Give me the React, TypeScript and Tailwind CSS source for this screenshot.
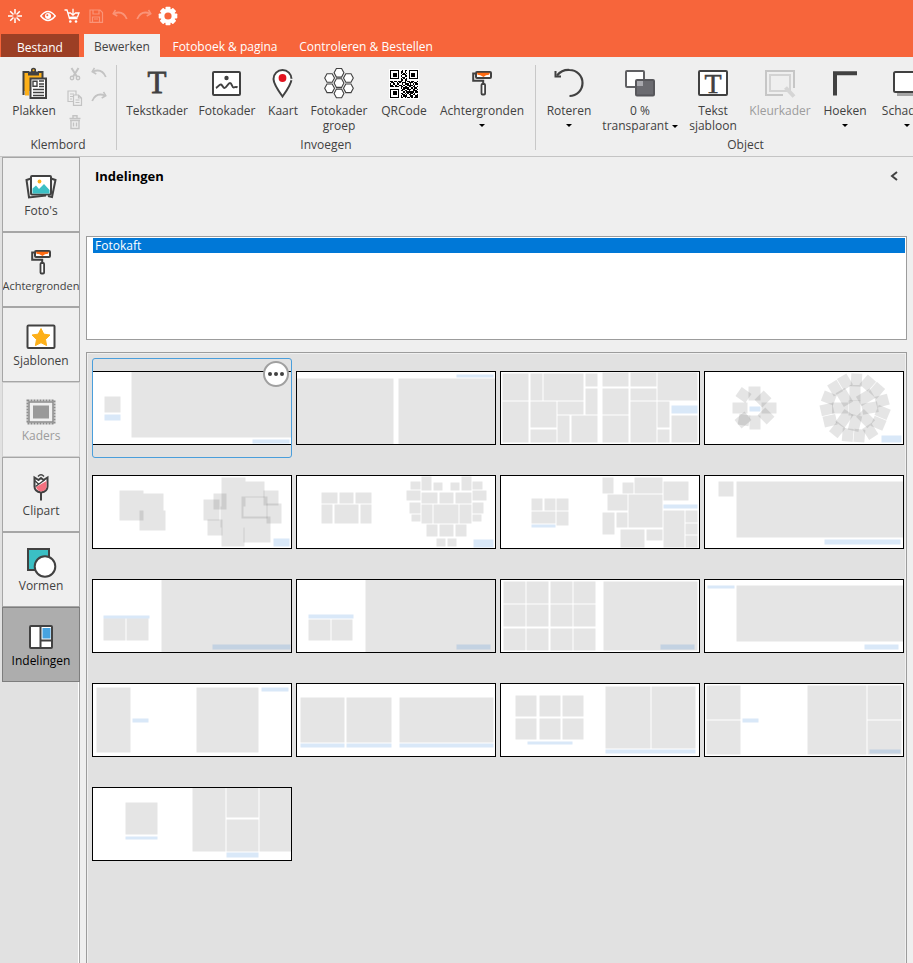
import type { ReactNode } from "react";
import clsx from "clsx";

type Box = [number, number, number, number, number?];
type Layout = { name: string; photos: Box[]; texts: Box[] };

const INK = "#414141";

/* ---------- layout thumbnails (200 x 74 units each) ---------- */

function ring(cx: number, cy: number, radius: number, count: number, w: number, h: number, start: number): Box[] {
  return Array.from({ length: count }, (_, i) => {
    const angle = start + (i * 360) / count;
    const rad = (angle * Math.PI) / 180;
    const tilt = i % 3 === 1 ? 14 : i % 3 === 2 ? -10 : 0;
    return [cx + Math.sin(rad) * radius - w / 2, cy - Math.cos(rad) * radius - h / 2, w, h, angle + tilt] as Box;
  });
}

function matrix(xs: number[], ys: number[], w: number, h: number): Box[] {
  return ys.flatMap((y) => xs.map((x) => [x, y, w, h] as Box));
}

const layouts: Layout[] = [
  { name: "Indeling 1", photos: [[39, 0, 161, 67], [12, 25, 17, 17]], texts: [[12, 43, 17, 7], [160, 68, 38, 5]] },
  { name: "Indeling 2", photos: [[0, 7, 98, 67], [102, 7, 98, 67]], texts: [[160, 3, 38, 4]] },
  {
    name: "Indeling 3",
    photos: [
      [2, 2, 27, 28], [30, 2, 13, 28], [43, 2, 41, 28], [85, 2, 13, 14], [2, 30, 27, 42], [30, 30, 27, 27],
      [57, 30, 27, 14], [85, 17, 13, 27], [30, 58, 27, 14], [57, 44, 13, 28], [71, 44, 27, 28], [102, 1, 27, 15],
      [102, 17, 27, 27], [102, 44, 27, 28], [130, 1, 27, 15], [130, 17, 27, 13], [130, 30, 27, 42], [157, 1, 41, 29],
      [157, 30, 13, 27], [157, 58, 13, 14], [171, 44, 27, 28],
    ],
    texts: [[171, 34, 27, 9]],
  },
  {
    name: "Indeling 4",
    photos: [
      [44, 15, 13, 15], [28, 31, 16, 12], [57, 31, 16, 12], [45, 44, 12, 15], [33, 18, 13, 12, 35], [52, 22, 14, 12, -45],
      [55, 39, 14, 12, 45], [32, 43, 14, 12, -40], [34, 43, 12, 12, 10],
      ...ring(151, 37, 28, 15, 12, 14, 3),
      ...ring(151, 37, 15, 8, 12, 17, 0),
      [144, 29, 13, 16],
    ],
    texts: [[45, 35, 12, 6], [177, 64, 21, 8]],
  },
  {
    name: "Indeling 5",
    photos: [
      [27, 15, 25, 31], [51, 18, 21, 18], [47, 35, 27, 21], [129, 2, 25, 30], [153, 6, 20, 17], [171, 15, 16, 16],
      [149, 21, 27, 23], [174, 28, 16, 21], [121, 18, 14, 17], [111, 24, 17, 22], [128, 31, 24, 22], [115, 44, 16, 17],
      [129, 52, 24, 20], [151, 41, 28, 27],
    ],
    texts: [[181, 63, 17, 9]],
  },
  {
    name: "Indeling 6",
    photos: [
      [25, 17, 17, 12], [43, 17, 15, 12], [59, 17, 17, 12], [25, 29, 12, 20], [38, 29, 25, 20], [64, 29, 12, 20],
      [114, 6, 11, 9], [125, 1, 11, 15], [137, 7, 10, 9], [154, 7, 10, 9], [165, 1, 11, 15], [176, 6, 11, 9],
      [110, 15, 15, 11], [125, 17, 17, 12], [143, 17, 15, 12], [159, 17, 17, 12], [176, 15, 15, 11], [113, 27, 12, 12],
      [115, 39, 10, 8], [125, 29, 12, 20], [137, 29, 26, 20], [163, 29, 13, 20], [176, 27, 12, 12], [176, 39, 10, 8],
      [130, 49, 12, 13], [143, 49, 15, 13], [159, 49, 12, 13], [140, 63, 10, 9], [151, 63, 10, 9],
    ],
    texts: [[177, 64, 21, 9]],
  },
  {
    name: "Indeling 7",
    photos: [
      [31, 23, 12, 13], [44, 23, 12, 13], [56, 23, 13, 13], [31, 36, 25, 13], [56, 36, 13, 15], [102, 2, 12, 17],
      [122, 7, 12, 12], [134, 2, 29, 17], [163, 6, 26, 20], [107, 19, 21, 17], [128, 19, 35, 34], [102, 37, 13, 23],
      [116, 37, 12, 16], [120, 54, 25, 19], [146, 54, 17, 12], [163, 35, 22, 38], [185, 35, 13, 13], [185, 48, 13, 12],
      [185, 60, 13, 13],
    ],
    texts: [[31, 49, 25, 4], [163, 29, 35, 5]],
  },
  { name: "Indeling 8", photos: [[14, 6, 16, 16], [32, 6, 168, 57]], texts: [[120, 64, 77, 6]] },
  { name: "Indeling 9", photos: [[69, 0, 131, 74], [11, 39, 23, 23], [34, 39, 23, 23]], texts: [[11, 36, 47, 4], [120, 65, 79, 6]] },
  { name: "Indeling 10", photos: [[69, 0, 131, 74], [12, 40, 23, 22], [35, 40, 22, 22]], texts: [[12, 35, 46, 5], [160, 65, 35, 6]] },
  {
    name: "Indeling 11",
    photos: [...matrix([3, 26, 50, 73], [2, 25, 49], 23, 23), [103, 2, 95, 70]],
    texts: [[160, 65, 35, 6]],
  },
  { name: "Indeling 12", photos: [[32, 6, 168, 57]], texts: [[3, 6, 28, 4], [160, 65, 35, 6]] },
  { name: "Indeling 13", photos: [[4, 4, 35, 66], [104, 4, 63, 66]], texts: [[40, 35, 17, 5], [169, 4, 28, 5]] },
  {
    name: "Indeling 14",
    photos: [[4, 14, 45, 46], [50, 14, 46, 46], [103, 14, 95, 46]],
    texts: [[4, 60, 45, 5], [50, 60, 46, 5], [103, 60, 95, 5]],
  },
  {
    name: "Indeling 15",
    photos: [...matrix([15, 39, 62], [12, 35], 22, 22), [105, 3, 46, 63], [151, 3, 45, 63]],
    texts: [[27, 58, 46, 4], [105, 66, 91, 5]],
  },
  {
    name: "Indeling 16",
    photos: [[2, 2, 35, 35], [2, 37, 35, 35], [103, 2, 60, 70], [163, 2, 35, 35], [163, 37, 35, 35]],
    texts: [[38, 35, 17, 5], [165, 66, 32, 5]],
  },
  {
    name: "Indeling 17",
    photos: [[33, 15, 33, 33], [100, 0, 34, 65], [134, 0, 33, 31], [134, 32, 33, 33], [167, 0, 33, 65]],
    texts: [[33, 49, 33, 4], [134, 65, 33, 6]],
  },
];

function Thumbnail({ layout, selected }: { layout: Layout; selected: boolean }) {
  const draw = ([x, y, w, h, angle = 0]: Box, i: number) => (
    <rect key={i} x={x + 0.5} y={y + 0.5} width={w - 1} height={h - 1} transform={`rotate(${angle} ${x + w / 2} ${y + h / 2})`} />
  );
  return (
    <svg viewBox="0 0 200 74" className="block w-full bg-white" aria-hidden="true">
      <g fill="#000" fillOpacity=".1">{layout.photos.map(draw)}</g>
      <g fill="#0066d0" fillOpacity=".15">{layout.texts.map(draw)}</g>
      {selected ? (
        <path d="M0 .5H200M0 73.5H200" stroke="#000" />
      ) : (
        <rect x=".5" y=".5" width="199" height="73" fill="none" stroke="#000" />
      )}
    </svg>
  );
}

/* ---------- icons ---------- */

function Icon({ size = 32, className, children }: { size?: number; className?: string; children: ReactNode }) {
  return (
    <svg width={size} height={size} viewBox={`0 0 ${size} ${size}`} fill="none" stroke={INK} strokeWidth="2" className={clsx("shrink-0", className)} aria-hidden="true">
      {children}
    </svg>
  );
}

const Spark = () => (
  <Icon size={16}>
    <g stroke="#fff" strokeWidth="1.5">
      <path d="M8 1v4.500M8 10.500V15M1 8h4.500M10.500 8H15M3.200 3.200l3 3M9.800 9.800l3 3M12.800 3.200l-3 3M6.200 9.800l-3 3" />
      <circle cx="8" cy="8" r="2.300" strokeWidth=".8" strokeOpacity=".6" />
    </g>
  </Icon>
);
const Eye = () => (
  <Icon size={16}>
    <path d="M.8 8Q8-.8 15.200 8 8 16.800.8 8Z" stroke="#fff" strokeWidth="1.500" />
    <circle cx="8" cy="8" r="3" fill="#fff" stroke="none" />
    <circle cx="7.300" cy="7.300" r="1" fill="#f7653b" stroke="none" />
  </Icon>
);
const Cart = () => (
  <Icon size={16}>
    <path d="M.5 2h2.500l2.500 8.500h8M3.500 5h3M11.500 5H15l-1.500 4-8.500.5M9 .8v6M6.300 4.800 9 7.200l2.700-2.400" stroke="#fff" strokeWidth="1.300" />
    <circle cx="6.300" cy="13.500" r="1.300" fill="#fff" stroke="none" />
    <circle cx="12" cy="13.500" r="1.300" fill="#fff" stroke="none" />
  </Icon>
);
const Save = () => (
  <Icon size={16}>
    <path d="M2 2h10l2.500 2.500V14.300H2ZM5 2v4h6V2M4.500 14V9h7v5M6 11h4" stroke="#fa9478" strokeWidth="1.200" />
  </Icon>
);
function Turn({ color, flip }: { color: string; flip?: boolean }) {
  return (
    <Icon size={16} className={flip ? "-scale-x-100" : ""}>
      <path d="M2 5.500Q11 2 14.800 11" stroke={color} strokeWidth="1.800" />
      <path d="M3.500 2 1.200 5.700 5.300 8" stroke={color} strokeWidth="1.500" />
    </Icon>
  );
}
const Gear = () => (
  <Icon size={20}>
    <g fill="#fff" stroke="none">
      <circle cx="10" cy="10" r="7.300" />
      {[0, 45, 90, 135].map((a) => (
        <rect key={a} x="7.500" y=".7" width="5" height="18.600" rx=".8" transform={`rotate(${a} 10 10)`} />
      ))}
    </g>
    <circle cx="10" cy="10" r="3.600" fill="#f7653b" stroke="none" />
  </Icon>
);

const Paste = () => (
  <Icon>
    <path d="M5.500 5h19v19h-19z" fill="#fdb019" stroke="none" />
    <path d="M5.500 28V5H11M20 5h4.500v6" />
    <path d="M7 24h4v4.500H7z" fill="#fdb019" stroke="none" />
    <path d="M10 8.500V4.500h3V2q2.500-2.500 5 0v2.500h3v4Z" fill={INK} stroke="none" />
    <circle cx="15.500" cy="3.200" r="1" fill="#fdb019" stroke="none" />
    <path d="M12.500 11.500H28v19.500H12.500z" fill="#fff" />
    <path d="M15 14.200h4v5h-4ZM21 14h5M21 17h5M21 19.500h5M15 22.500h11M15 25.500h11M15 28.500h11" strokeWidth="1.400" />
  </Icon>
);
const Scissors = () => (
  <Icon size={16}>
    <path d="M4.500 2 9.800 10.500M11.500 2 6.200 10.500" stroke="#c3c3c3" strokeWidth="2" />
    <circle cx="5" cy="12" r="1.700" stroke="#c3c3c3" strokeWidth="1.400" />
    <circle cx="11" cy="12" r="1.700" stroke="#c3c3c3" strokeWidth="1.400" />
  </Icon>
);
const Copy = () => (
  <Icon size={16}>
    <g stroke="#c3c3c3" strokeWidth="1.200">
      <path d="M6 11.500H1V1h8v4M3 4h4M3 6.500h3M3 9h2" />
      <path d="M6.500 5h5l3 3v7.400h-8ZM11.500 5v3h3M8.500 10h4M8.500 12.500h4" />
    </g>
  </Icon>
);
const Trash = () => (
  <Icon size={16}>
    <path d="M2.500 4.500h11M6 4V1.800h4V4M4 7v7.500h8V7M3 6.500h10M6.500 8.500v4M9.500 8.500v4" stroke="#c3c3c3" strokeWidth="1.400" />
  </Icon>
);
const LetterT = () => (
  <Icon>
    <text x="16" y="26" textAnchor="middle" fontFamily="Liberation Serif, serif" fontSize="31" fill={INK} stroke={INK} strokeWidth=".8">T</text>
  </Icon>
);
const PhotoFrame = () => (
  <Icon>
    <rect x="2" y="5" width="27" height="23" rx="1" fill="#fff" />
    <circle cx="15.500" cy="11" r="2.200" fill={INK} stroke="none" />
    <path d="M5 21c2-1 3.500-4 5-3.500s2 3.500 3.500 3.500c2 0 3.500-5 5.500-5s2 4.500 3.500 4.500S25 19 26.500 20.500" />
  </Icon>
);
const MapPin = () => (
  <Icon>
    <path d="M15.500 29.500Q6.500 17 6.500 12a9 9 0 0 1 18 0Q24.500 17 15.500 29.500Z" fill="#fff" />
    <circle cx="15.500" cy="11" r="3.900" fill="#e3131f" stroke="none" />
    <path d="M23 12.500h3" stroke="#efefef" strokeWidth="1.500" />
  </Icon>
);
const Honeycomb = () => (
  <Icon>
    {[[16, 5.8], [16, 16.1], [16, 26.4], [6.6, 11], [25.4, 11], [6.6, 21.3], [25.4, 21.3]].map(([x, y]) => (
      <path key={`${x}-${y}`} d={`M${x - 2.6} ${y - 4.3}h5.200l2.300 4.300-2.300 4.300h-5.200l-2.300-4.300Z`} fill="#fff" strokeWidth="1.100" />
    ))}
  </Icon>
);

const qrRows = [
  "111111100101101111111", "100000101101001000001", "101110101010101011101", "101110100111001011101",
  "101110101001101011101", "100000100110001000001", "111111101010101111111", "000000001101100000000",
  "110110111001011011001", "011001010111001110110", "101101100101110101011", "110010011010011110100",
  "111011101101101101101", "000000001011110010110", "111111100110011101101", "100000101101101001110",
  "101110100010111111011", "101110101101010110100", "101110100110101101101", "100000101011100110011", "111111101101011010111",
];
const QrCode = () => (
  <Icon>
    <g transform="translate(2 3) scale(1.333)" shapeRendering="crispEdges">
      <rect x="-.5" y="-.5" width="22" height="22" fill="#fff" stroke="none" />
      <path
        d={qrRows.map((row, y) => [...row].map((c, x) => (c === "1" ? `M${x} ${y}h1v1h-1z` : "")).join("")).join("")}
        fill="#000"
        stroke="none"
      />
    </g>
  </Icon>
);
const Roller = () => (
  <Icon>
    <g transform="translate(0 2)">
      <path d="M9 4.500H7.200v7.300h10V16" strokeWidth="2" />
      <rect x="10" y="3" width="15" height="6" rx="1" fill="#fff" />
      <path d="M11 3.800h13l-1 2-3 .5-2.500 1.700-3-1.700-3-.5Z" fill="#ff6b12" stroke="none" />
      <rect x="15.500" y="15" width="3.600" height="10.500" rx="1" fill="#fff" strokeWidth="1.800" />
    </g>
  </Icon>
);
const Rotate = () => (
  <Icon>
    <path d="M4 8.500Q9 2.500 16.500 3a13 13 0 0 1 0 26" strokeWidth="2.200" />
    <path d="M2.500 4V9.500H8" strokeWidth="2" />
  </Icon>
);
const Transparency = () => (
  <Icon>
    <rect x="2" y="4" width="18" height="16" rx="1" fill="#fff" stroke="#606063" />
    <rect x="12" y="13" width="18" height="15.500" rx="1" fill="#6b6b70" stroke="#57575b" />
    <path d="M13 14h6v5h-6z" fill="#a8a8ad" stroke="none" />
  </Icon>
);
const TextTemplate = () => (
  <Icon>
    <rect x="2" y="4" width="28" height="24" rx="1" fill="#fff" />
    <text x="16" y="25.500" textAnchor="middle" fontFamily="Liberation Serif, serif" fontSize="28" fill={INK} stroke={INK} strokeWidth=".5">T</text>
  </Icon>
);
const ColorFrame = () => (
  <Icon>
    <path d="M19 28H2V4h28v17" stroke="#c6c6c6" />
    <rect x="6" y="8" width="20" height="16" stroke="#d3d3d3" />
    <path d="m21.500 20.500 8.500 9" stroke="#d5d5d5" strokeWidth="4" />
  </Icon>
);
const Corners = () => (
  <Icon>
    <path d="M6 28.500V6.200H28" strokeWidth="4" />
  </Icon>
);
const Shadow = () => (
  <Icon>
    <path d="M6 26h24v3H6z" fill="#a5a5a5" stroke="none" />
    <rect x="3" y="5" width="26" height="20" rx="1.500" fill="#fff" />
  </Icon>
);
const Photos = () => (
  <Icon>
    <path d="m6 7.500-4.500 1.500 2.500 17.500 17-2M26 7.500l4.500 1.500L27 26l-4-1" />
    <rect x="6" y="5" width="20" height="18.500" rx="1" fill="#fff" />
    <path d="M7.500 22.500v-5l3.500-3 3 3.500 5-5 5.500 6v3.500Z" fill="#3bbfc4" stroke="none" />
    <circle cx="14.500" cy="10.500" r="1.900" fill="#fdb019" stroke="none" />
  </Icon>
);
const StarFrame = () => (
  <Icon>
    <rect x="2.500" y="4.500" width="27" height="22.500" rx="1" fill="#fff" />
    <path d="m16 7.500 2.800 5.600 6.200.9-4.500 4.400 1.100 6.200L16 21.700l-5.600 2.900 1.100-6.200L7 14l6.200-.9Z" fill="#fdb019" stroke="#fdb019" strokeWidth="1" strokeLinejoin="round" />
  </Icon>
);
const StampFrame = () => (
  <Icon>
    <rect x="2.500" y="4.500" width="27" height="23" stroke="#8c8c8c" strokeWidth="2" strokeDasharray="2 1" />
    <rect x="4" y="6" width="24" height="20" fill="#efefef" stroke="#8c8c8c" strokeWidth="1.500" />
    <rect x="8" y="9.500" width="16" height="13" fill="#999" stroke="none" />
  </Icon>
);
const Tulip = () => (
  <Icon>
    <path d="M16 21.500v8" />
    <path d="M9.500 6.500v9q0 5 6.500 6 6.500-1 6.500-6v-9l-4 2.500L16 7l-2.500 2Z" fill="#fff" />
    <path d="M21.500 10v6.500q-1 3.500-5.500 4-3.500-.5-5-4.500Z" fill="#f4717f" stroke="none" />
    <path d="m10.500 15.500 9-6.500M13 5.500q3-3.500 6 0M9.500 9.500l4 3.500" strokeWidth="1.500" />
  </Icon>
);
const Shapes = () => (
  <Icon>
    <rect x="3" y="3" width="21" height="21" fill="#3bbfc4" />
    <circle cx="20" cy="20.500" r="10.300" fill="#fff" />
  </Icon>
);
const Layouts = () => (
  <Icon>
    <rect x="5" y="5" width="22" height="22" rx="1" fill="#fff" />
    <path d="M15.500 5v22M15.500 19.500H27" />
    <path d="M17.500 7h8v10.500h-8z" fill="#47a3e0" stroke="none" />
  </Icon>
);

/* ---------- ribbon ---------- */

type Tool = { label: string[]; icon: ReactNode; width: string; menu?: "below" | "inline"; disabled?: boolean };

const insertTools: Tool[] = [
  { label: ["Tekstkader"], icon: <LetterT />, width: "w-[70px]" },
  { label: ["Fotokader"], icon: <PhotoFrame />, width: "w-[70px]" },
  { label: ["Kaart"], icon: <MapPin />, width: "w-[42px]" },
  { label: ["Fotokader", "groep"], icon: <Honeycomb />, width: "w-[70px]" },
  { label: ["QRCode"], icon: <QrCode />, width: "w-[60px]" },
  { label: ["Achtergronden"], icon: <Roller />, width: "w-[96px]", menu: "below" },
];

const objectTools: Tool[] = [
  { label: ["Roteren"], icon: <Rotate />, width: "w-[56px]", menu: "below" },
  { label: ["0 %", "transparant"], icon: <Transparency />, width: "w-[86px]", menu: "inline" },
  { label: ["Tekst", "sjabloon"], icon: <TextTemplate />, width: "w-[60px]" },
  { label: ["Kleurkader"], icon: <ColorFrame />, width: "w-[74px]", disabled: true },
  { label: ["Hoeken"], icon: <Corners />, width: "w-[56px]", menu: "below" },
  { label: ["Schaduw"], icon: <Shadow />, width: "w-[68px]", menu: "below" },
];

const Arrow = () => <span className="inline-block border-x-[3px] border-t-[3px] border-x-transparent border-t-black align-middle" />;

function ToolButton({ tool }: { tool: Tool }) {
  return (
    <button
      type="button"
      disabled={tool.disabled}
      className={clsx("flex shrink-0 flex-col items-center whitespace-nowrap leading-[15px]", tool.width, tool.disabled && "text-[#9c9c9c]")}
    >
      {tool.icon}
      <span className="mt-1">{tool.label[0]}</span>
      {tool.label[1] && (
        <span>
          {tool.label[1]} {tool.menu === "inline" && <Arrow />}
        </span>
      )}
      {tool.menu === "below" && <span className="leading-[13px]"><Arrow /></span>}
    </button>
  );
}

function Group({ label, className, children }: { label: string; className?: string; children: ReactNode }) {
  return (
    <section aria-label={label} className={clsx("flex shrink-0 flex-col justify-between pb-[3px]", className)}>
      <div className="flex">{children}</div>
      <p className="text-center leading-4">{label}</p>
    </section>
  );
}

const Divider = () => <div className="h-[85px] w-px shrink-0 bg-[#c8c8c8]" />;

/* ---------- side navigation ---------- */

const sections = [
  { label: "Foto's", icon: <Photos /> },
  { label: "Achtergronden", icon: <Roller />, long: true },
  { label: "Sjablonen", icon: <StarFrame /> },
  { label: "Kaders", icon: <StampFrame />, disabled: true },
  { label: "Clipart", icon: <Tulip /> },
  { label: "Vormen", icon: <Shapes /> },
  { label: "Indelingen", icon: <Layouts />, active: true },
];

export default function App() {
  return (
    <div className="flex min-h-screen flex-col overflow-hidden bg-[#efefef] font-['Open_Sans','Noto_Sans',sans-serif] text-xs text-[#414141]">
      <header className="bg-[#f7653b] text-white">
        <div className="flex h-[34px] items-center gap-2 pb-[2px] pl-[7px]">
          <span className="mr-[9px]"><Spark /></span>
          <button type="button" aria-label="Voorbeeld"><Eye /></button>
          <button type="button" aria-label="Winkelwagen"><Cart /></button>
          <button type="button" aria-label="Opslaan"><Save /></button>
          <button type="button" aria-label="Ongedaan maken"><Turn color="#fa9478" /></button>
          <button type="button" aria-label="Opnieuw"><Turn color="#fa9478" flip /></button>
          <button type="button" aria-label="Instellingen" className="-ml-[2px]"><Gear /></button>
        </div>
        <nav className="flex h-[23px] items-stretch whitespace-nowrap pl-px">
          <button type="button" className="w-[78px] bg-[#9c3f25] pt-1">Bestand</button>
          <button type="button" aria-current="page" className="ml-[5px] w-[76px] bg-[#efefef] pt-[2px] text-[#414141]">Bewerken</button>
          <button type="button" className="w-[130px] pt-[2px]">Fotoboek &amp; pagina</button>
          <button type="button" className="ml-2 w-[136px] pt-[2px]">Controleren &amp; Bestellen</button>
        </nav>
      </header>

      <div className="flex h-[100px] shrink-0 overflow-hidden border-b border-[#c4c4c4] pt-2">
        <Group label="Klembord" className="w-[116px]">
          <div className="w-[68px] pt-[2px]">
            <ToolButton tool={{ label: ["Plakken"], icon: <Paste />, width: "w-[68px]" }} />
          </div>
          <div className="-ml-px grid grid-cols-[24px_16px] content-start gap-y-2 pt-px">
            <button type="button" aria-label="Knippen"><Scissors /></button>
            <button type="button" aria-label="Ongedaan maken"><Turn color="#c3c3c3" /></button>
            <button type="button" aria-label="Kopiëren"><Copy /></button>
            <button type="button" aria-label="Opnieuw"><Turn color="#c3c3c3" flip /></button>
            <button type="button" aria-label="Verwijderen"><Trash /></button>
          </div>
        </Group>
        <Divider />
        <Group label="Invoegen" className="w-[418px] pl-[5px] pr-[5px] pt-[2px]">
          {insertTools.map((t) => <ToolButton key={t.label.join()} tool={t} />)}
        </Group>
        <Divider />
        <Group label="Object" className="w-[414px] pl-[5px] pt-[2px]">
          {objectTools.map((t) => <ToolButton key={t.label.join()} tool={t} />)}
        </Group>
      </div>

      <div className="flex grow">
        <nav aria-label="Onderdelen" className="w-20 shrink-0 border-r border-[#a6a6a6] bg-[#e1e1e1] pl-[2px] shadow-[inset_-1px_0_#fff]">
          {sections.map((s) => (
            <button
              key={s.label}
              type="button"
              disabled={s.disabled}
              className={clsx(
                "-mr-px flex h-[75px] w-[78px] flex-col items-center overflow-hidden border pt-[13px] leading-4",
                s.long && "text-[11px]",
                s.active ? "border-[#7d7d7d] bg-[#adadad] text-black" : s.disabled ? "border-[#d0d0d0] bg-[#efefef] text-[#9c9c9c]" : "border-[#a6a6a6] bg-[#efefef]",
              )}
            >
              {s.icon}
              {s.label}
            </button>
          ))}
        </nav>

        <main className="flex min-w-0 grow flex-col px-[6px]">
          <div className="flex h-[79px] items-start justify-between pl-[9px] pr-2 pt-[9px]">
            <h1 className="text-[13px] font-bold leading-5 text-black">Indelingen</h1>
            <button type="button" aria-label="Paneel inklappen" className="pt-1">
              <svg width="10" height="12" viewBox="0 0 10 12" fill="none" stroke={INK} strokeWidth="2" aria-hidden="true">
                <path d="M8 2 3 6l5 4" />
              </svg>
            </button>
          </div>
          <ul role="listbox" aria-label="Categorie" className="h-[104px] shrink-0 border border-[#9c9c9c] bg-white pl-[6px] pr-px pt-px">
            <li role="option" aria-selected="true" className="bg-[#0078d7] pl-[2px] leading-[15px] text-white">Fotokaft</li>
          </ul>
          <div className="mt-3 grow border border-b-0 border-[#9c9c9c] bg-[#e1e1e1] pl-[5px] pt-[5px] shadow-[inset_1px_1px_#f0f0f0,inset_-1px_0_#f0f0f0]">
            <ul className="grid grid-cols-[repeat(auto-fill,200px)] gap-1">
              {layouts.map((layout, i) => (
                <li key={layout.name} className="relative">
                  <button
                    type="button"
                    aria-label={layout.name}
                    aria-pressed={i === 0}
                    className={clsx(
                      "flex h-[100px] w-full items-center overflow-hidden",
                      i === 0 && "rounded-[3px] outline outline-1 -outline-offset-1 outline-[#4a9edb]",
                    )}
                  >
                    <Thumbnail layout={layout} selected={i === 0} />
                  </button>
                  {i === 0 && (
                    <button
                      type="button"
                      aria-label="Meer opties"
                      className="absolute right-[3px] top-[3px] flex size-[26px] items-center justify-center gap-[2px] rounded-full border-2 border-[#a0a0a0] bg-white"
                    >
                      <span className="size-1 rounded-full bg-[#414141]" />
                      <span className="size-1 rounded-full bg-[#414141]" />
                      <span className="size-1 rounded-full bg-[#414141]" />
                    </button>
                  )}
                </li>
              ))}
            </ul>
          </div>
        </main>
      </div>
    </div>
  );
}
